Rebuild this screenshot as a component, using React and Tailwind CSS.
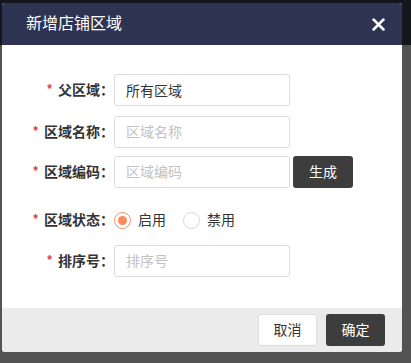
import { useState } from 'react';

const font = { fontFamily: '"Liberation Sans", "Noto Sans CJK SC", sans-serif' };

function Label({ children }) {
    return (
        <div className="w-[112px] flex items-center justify-end text-[14px] font-bold text-[#333]">
            <span className="text-[#e8343a] text-[12px] mr-[6px] -mt-[2px]">*</span>
            <span>{children}</span>
        </div>
    );
}

function Field({ value, placeholder }) {
    return (
        <input
            defaultValue={value}
            placeholder={placeholder}
            className="w-[176px] h-[32px] px-[11px] border border-[#dcdcdc] rounded-[3px] text-[14px] text-[#333] placeholder-[#c2c2c2] outline-none"
            style={font}
        />
    );
}

function Radio({ checked, label, onClick }) {
    return (
        <button type="button" onClick={onClick} className="flex items-center">
            <span className={`w-[17px] h-[17px] rounded-full border flex items-center justify-center bg-white ${checked ? 'border-[#ff8a5c]' : 'border-[#d6d6d6]'}`}>
                {checked && <span className="w-[9px] h-[9px] rounded-full bg-[#ff8a5c]" />}
            </span>
            <span className="ml-[7px] text-[14px] text-[#333]">{label}</span>
        </button>
    );
}

export default function App() {
    const [enabled, setEnabled] = useState(true);

    return (
        <div className="relative w-[411px] h-[363px] bg-[#535353] overflow-hidden" style={font}>
            {/* page behind the overlay */}
            <div className="h-[45px] bg-[#14161e]" />

            {/* Dialog */}
            <div className="absolute left-[2px] top-[3px] w-[400px] h-[349px] bg-white rounded-[3px] overflow-hidden flex flex-col">
                <div className="h-[42px] bg-[#2f3352] flex items-center justify-between pl-[24px] pr-[17px]">
                    <h2 className="text-[16px] text-white">新增店铺区域</h2>
                    <button type="button" className="text-white">
                        <svg width="13" height="13" viewBox="0 0 12 12">
                            <path d="M1.5 1.5 L10.5 10.5 M10.5 1.5 L1.5 10.5" stroke="currentColor" strokeWidth="2.6" strokeLinecap="round" />
                        </svg>
                    </button>
                </div>

                <div className="flex-1 pt-[29px]">
                    <div className="flex items-center">
                        <Label>父区域：</Label>
                        <Field value="所有区域" />
                    </div>
                    <div className="flex items-center mt-[10px]">
                        <Label>区域名称：</Label>
                        <Field placeholder="区域名称" />
                    </div>
                    <div className="flex items-center mt-[8px]">
                        <Label>区域编码：</Label>
                        <Field placeholder="区域编码" />
                        <button type="button" className="ml-[3px] w-[60px] h-[32px] bg-[#3d3d3d] rounded-[3px] text-white text-[14px]">
                            生成
                        </button>
                    </div>
                    <div className="flex items-center h-[32px] mt-[16px]">
                        <Label>区域状态：</Label>
                        <div className="flex items-center gap-[17px]">
                            <Radio checked={enabled} label="启用" onClick={() => setEnabled(true)} />
                            <Radio checked={!enabled} label="禁用" onClick={() => setEnabled(false)} />
                        </div>
                    </div>
                    <div className="flex items-center mt-[9px]">
                        <Label>排序号：</Label>
                        <Field placeholder="排序号" />
                    </div>
                </div>

                <div className="h-[44px] bg-[#ebebeb] flex items-center justify-end gap-[9px] pr-[17px]">
                    <button type="button" className="w-[59px] h-[32px] bg-white border border-[#dedede] rounded-[3px] text-[14px] text-[#333]">
                        取消
                    </button>
                    <button type="button" className="w-[59px] h-[32px] bg-[#3d3d3d] rounded-[3px] text-[14px] text-white">
                        确定
                    </button>
                </div>
            </div>
        </div>
    );
}
